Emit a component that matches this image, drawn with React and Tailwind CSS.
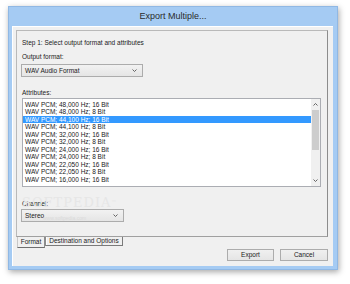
import { useState } from 'react'

const ROWS = [
  'WAV PCM; 48,000 Hz; 16 Bit',
  'WAV PCM; 48,000 Hz; 8 Bit',
  'WAV PCM; 44,100 Hz; 16 Bit',
  'WAV PCM; 44,100 Hz; 8 Bit',
  'WAV PCM; 32,000 Hz; 16 Bit',
  'WAV PCM; 32,000 Hz; 8 Bit',
  'WAV PCM; 24,000 Hz; 16 Bit',
  'WAV PCM; 24,000 Hz; 8 Bit',
  'WAV PCM; 22,050 Hz; 16 Bit',
  'WAV PCM; 22,050 Hz; 8 Bit',
  'WAV PCM; 16,000 Hz; 16 Bit',
]

function Chevron({ up = false, className = '' }) {
  return (
    <svg width="5" height="3" viewBox="0 0 5 3" className={className}>
      <path
        d={up ? 'M0.5 2.5 L2.5 0.5 L4.5 2.5' : 'M0.5 0.5 L2.5 2.5 L4.5 0.5'}
        fill="none"
        stroke="#555"
        strokeWidth="0.9"
      />
    </svg>
  )
}

// Windows 8 style combobox, scaled down with the rest of the dialog
function Combo({ value, width }) {
  return (
    <div
      className={`${width} h-[13px] -ml-[1px] flex items-center justify-between border border-[#acacac] bg-gradient-to-b from-[#f2f2f2] to-[#e5e5e5] pl-[3px] pr-[5px]`}
    >
      <span className="leading-[8px]">{value}</span>
      <Chevron />
    </div>
  )
}

function Button({ children, width }) {
  return (
    <div
      className={`${width} h-[12px] flex items-center justify-center border border-[#acacac] bg-gradient-to-b from-[#f0f0f0] to-[#e5e5e5] leading-[8px]`}
    >
      {children}
    </div>
  )
}

export default function App() {
  const [selected, setSelected] = useState(2)

  return (
    <div className="w-[350px] h-[284px] bg-white overflow-hidden font-['Liberation_Sans',Arial,sans-serif] text-[6.5px] text-[#1a1a1a]">
      <div className="ml-[8px] mt-[6px] w-[330px] h-[264px] flex flex-col bg-[#a5cbf3] border border-[#90b8e4] shadow-[1px_2px_6px_rgba(0,0,0,0.35)]">
        <div className="h-[19px] flex items-center justify-center text-[9px] text-[#2b2b2b]">
          Export Multiple...
        </div>

        <div className="flex-1 ml-[3px] mr-[4px] mb-[3px] flex flex-col bg-[#f0f0f0] border-t border-l border-white pl-[3px] pr-[5px] pt-[3px]">
          <div className="relative h-[207px] flex flex-col border border-[#b9b9b9] border-r-[#8c8c8c] border-b-[#a0a0a0] pl-[5px] pr-[6px]">
            <div className="mt-[8px] leading-[8px]">Step 1: Select output format and attributes</div>
            <div className="mt-[6px] leading-[8px]">Output format:</div>
            <div className="mt-[3px]">
              <Combo value="WAV Audio Format" width="w-[122px]" />
            </div>
            <div className="mt-[12px] leading-[8px]">Attributes:</div>

            <div className="mt-[1px] h-[89px] flex border border-[#abadb3] bg-white">
              <div className="flex-1 pt-[1.5px] overflow-hidden">
                {ROWS.map((row, i) => (
                  <div
                    key={row}
                    onClick={() => setSelected(i)}
                    className={`h-[7.5px] leading-[7.5px] pl-[2px] whitespace-nowrap ${
                      i === selected ? 'bg-[#3399ff] text-white' : ''
                    }`}
                  >
                    {row}
                  </div>
                ))}
              </div>
              <div className="w-[9px] flex flex-col items-center bg-[#f0f0f0]">
                <div className="h-[11px] flex items-center justify-center">
                  <Chevron up />
                </div>
                <div className="w-[7px] h-[40px] bg-[#cdcdcd]" />
                <div className="flex-1" />
                <div className="h-[11px] flex items-center justify-center">
                  <Chevron />
                </div>
              </div>
            </div>

            <div className="mt-[13px] leading-[8px]">Channel:</div>
            <div className="mt-[1px]">
              <Combo value="Stereo" width="w-[103px]" />
            </div>

            {/* faint watermark over the channel area */}
            <div className="absolute left-[5px] top-[165px] text-[13px] leading-[13px] tracking-[1px] text-[#e6e6e6] font-['DejaVu_Serif',serif] pointer-events-none">
              SOFTPEDIA
              <span className="text-[5px] align-top">™</span>
            </div>
            <div className="absolute left-[26px] top-[184px] text-[5px] leading-[6px] text-[#dadada] pointer-events-none">
              www.softpedia.com
            </div>
          </div>

          <div className="flex items-start h-[12px] -mt-[1px] pl-[1px]">
            <div className="w-[28px] h-[12px] flex items-center justify-center bg-[#f0f0f0] border-l border-b border-r border-l-[#c8c8c8] border-b-[#6e6e6e] border-r-[#8c8c8c] leading-[8px]">
              Format
            </div>
            <div className="w-[78px] h-[10px] flex items-center justify-center border border-[#7a7a7a] border-l-[#8c8c8c] leading-[8px] shadow-[inset_1px_0_0_#ffffff]">
              Destination and Options
            </div>
          </div>

          <div className="mt-[1px] flex justify-end gap-[6px]">
            <Button width="w-[47px]">Export</Button>
            <Button width="w-[48px]">Cancel</Button>
          </div>
        </div>
      </div>
    </div>
  )
}
